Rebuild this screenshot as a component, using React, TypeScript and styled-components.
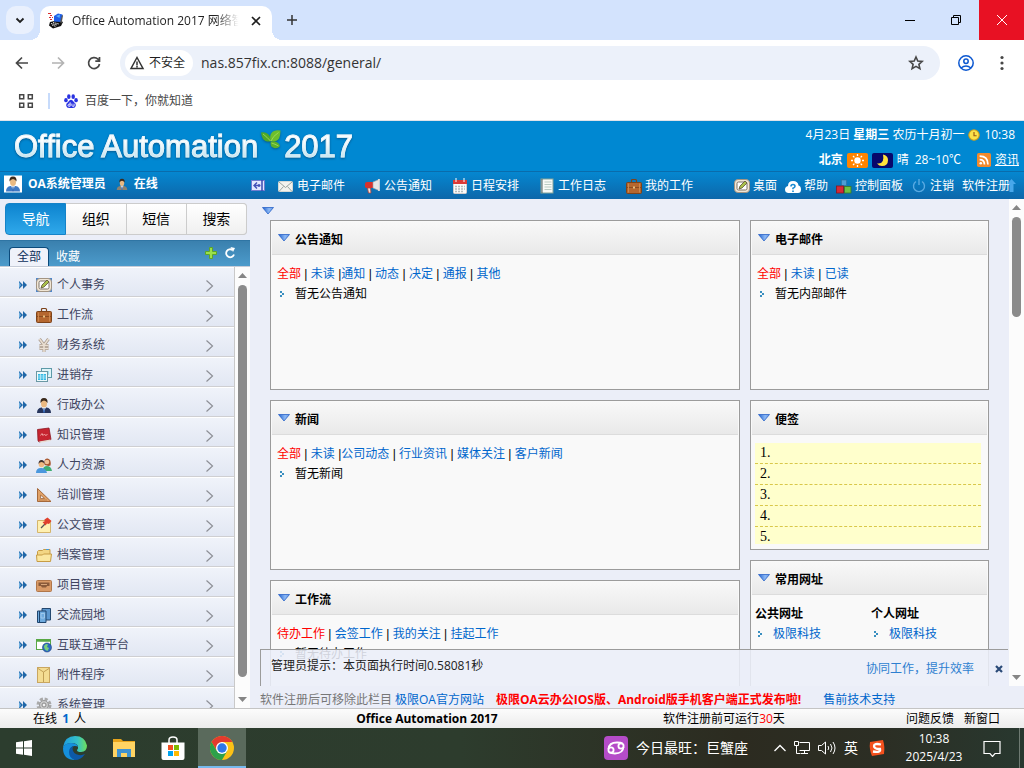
import React from 'react';
import styled, { createGlobalStyle, css } from 'styled-components';

const LATIN = '"Open Sans", "Noto Sans CJK SC", sans-serif';
const PLAIN = '"Liberation Sans", "Noto Sans CJK SC", sans-serif';

const GlobalStyle = createGlobalStyle`
  * { box-sizing: border-box; }
  body { margin: 0; font: 12px/20px ${LATIN}; color: #000; overflow: hidden; }
  button, input { font: inherit; color: inherit; border: 0; background: none; padding: 0; margin: 0; }
  a { color: #0066cc; text-decoration: none; }
  ul, ol { list-style: none; margin: 0; padding: 0; }
  h1, h2, h3, p { margin: 0; font-size: inherit; font-weight: inherit; }
  svg { display: block; flex: none; }
`;

const Screen = styled.div`
  display: flex;
  flex-direction: column;
  height: 100vh;
  white-space: nowrap;
`;

/* ---------- browser window ---------- */

const TabStrip = styled.div`
  display: flex;
  height: 40px;
  flex: none;
  background: #d3e3fd;
`;
const TabSearch = styled.button`
  display: grid;
  place-items: center;
  width: 28px;
  height: 28px;
  margin: 6px 6px 0;
  border-radius: 10px;
  background: #e9f0fd;
`;
const BrowserTab = styled.div`
  position: relative;
  display: flex;
  align-items: center;
  width: 232px;
  margin-top: 6px;
  padding: 0 10px 5px 8px;
  gap: 8px;
  background: #fff;
  border-radius: 10px 10px 0 0;
  &::before, &::after {
    content: '';
    position: absolute;
    bottom: 0;
    width: 10px;
    height: 10px;
  }
  &::before { left: -10px; background: radial-gradient(circle at 0 0, transparent 10px, #fff 10px); }
  &::after { right: -10px; background: radial-gradient(circle at 100% 0, transparent 10px, #fff 10px); }
`;
const TabTitle = styled.span`
  flex: 1;
  overflow: hidden;
  color: #1f1f1f;
  mask-image: linear-gradient(90deg, #000 84%, transparent 98%);
`;
const PlainButton = styled.button`
  display: grid;
  place-items: center;
  flex: none;
`;
const NewTab = styled(PlainButton)`
  width: 20px;
  margin-left: 10px;
`;
const WindowButtons = styled.div`
  display: flex;
  margin-left: auto;
`;
const WindowButton = styled(PlainButton)<{ $close?: boolean }>`
  width: ${p => (p.$close ? 45 : 46)}px;
  background: ${p => (p.$close ? '#e81123' : 'transparent')};
`;
const Toolbar = styled.div`
  display: flex;
  align-items: center;
  flex: none;
  height: 46px;
  padding: 0 14px;
  gap: 20px;
  background: #fff;
`;
const AddressBar = styled.div`
  display: flex;
  align-items: center;
  flex: 1;
  height: 34px;
  margin: 0 -2px;
  padding: 0 16px 0 5px;
  border-radius: 17px;
  background: #ecf1fa;
`;
const Insecure = styled.button`
  display: flex;
  align-items: center;
  height: 26px;
  gap: 4px;
  padding: 0 8px 0 4px;
  border-radius: 13px;
  background: #fff;
  color: #1f1f1f;
`;
const Url = styled.input`
  flex: 1;
  min-width: 0;
  margin-left: 8px;
  color: #333;
  font-size: 14px;
`;
const Bookmarks = styled.div`
  display: flex;
  align-items: center;
  flex: none;
  height: 35px;
  padding: 0 18px 5px;
  gap: 14px;
  background: #fff;
  border-bottom: 1px solid #dfe3ea;
  a { display: flex; align-items: center; gap: 7px; color: #474747; }
`;
const Divider = styled.span`
  width: 2px;
  height: 16px;
  background: #c7dbfb;
`;

/* ---------- OA header ---------- */

const Banner = styled.header`
  display: flex;
  justify-content: space-between;
  flex: none;
  height: 50px;
  padding-left: 14px;
  background: #0088d2;
  color: #fff;
`;
const Logo = styled.h1`
  display: flex;
  font: 31px/52px ${PLAIN};
  filter: drop-shadow(0 1px 1px #05598f);
  span {
    background: linear-gradient(#fff 40%, #bfe2ef 75%);
    background-clip: text;
    color: transparent;
    -webkit-text-stroke: 1px rgba(225, 242, 250, .7);
  }
  svg { margin: 8px 2px 0; }
`;
const InfoRows = styled.div`
  display: flex;
  flex-direction: column;
  align-items: flex-end;
  gap: 5px;
  padding: 4px 5px 0 0;
`;
const InfoRow = styled.div<{ $inset?: boolean }>`
  display: flex;
  align-items: center;
  height: 20px;
  gap: 4px;
  padding-right: ${p => (p.$inset ? 4 : 0)}px;
  a { color: #fff; text-decoration: underline; }
  span { margin: 0 12px 0 2px; }
`;
const MenuBar = styled.nav`
  display: flex;
  flex: none;
  height: 28px;
  padding: 1px 8px 0 4px;
  border-top: 1px solid #0a6cab;
  background: linear-gradient(#0587d0, #0d67aa);
  color: #fff;
  a { display: flex; align-items: center; gap: 3px; color: #fff; }
`;
const User = styled.div`
  display: flex;
  align-items: center;
  width: 247px;
  padding-bottom: 4px;
  gap: 6px;
  font-weight: bold;
  svg + span { margin-right: 4px; }
`;
const Shortcuts = styled.div`
  display: flex;
  align-items: center;
  gap: 20px;
  a:nth-child(2) { margin-left: -7px; }
`;
const Tools = styled.div`
  display: flex;
  align-items: center;
  gap: 8px;
  margin-left: auto;
`;
const ToTop = styled(PlainButton)`
  margin-left: -11px;
`;

/* ---------- workspace ---------- */

const Workspace = styled.div`
  display: flex;
  flex: 1;
  min-height: 0;
  background: #ebeef8;
`;
const Sidebar = styled.aside`
  display: flex;
  flex-direction: column;
  width: 250px;
  flex: none;
`;
const Segments = styled.div`
  display: flex;
  height: 32px;
  flex: none;
  margin: 4px 3px 5px 5px;
  border-radius: 4px;
  overflow: hidden;
  box-shadow: inset 0 0 0 1px #ccc;
`;
const Segment = styled.button<{ $on?: boolean }>`
  flex: 1;
  border: 1px solid #ccc;
  border-left-width: 0;
  background: linear-gradient(#fff, #f0f0f0);
  font: 14px/28px ${PLAIN};
  &:last-child { border-radius: 0 4px 4px 0; }
  ${p => p.$on && css`
    border: 1px solid #1583c8;
    border-radius: 4px 0 0 4px;
    background: linear-gradient(#0d84cf, #2fa8ea);
    color: #fff;
  `}
`;
const SubTabs = styled.div`
  display: flex;
  align-items: flex-end;
  flex: none;
  height: 26px;
  padding: 0 14px 0 9px;
  gap: 7px;
  border-top: 1px solid #2f75a4;
  background: linear-gradient(#3a80ae, #4c9bcb);
`;
const SubTab = styled.button<{ $on?: boolean }>`
  height: 18px;
  line-height: 18px;
  color: #fff;
  ${p => p.$on && css`
    height: 19px;
    padding: 0 7px;
    border: 1px solid #0b4a7b;
    border-bottom: 0;
    border-radius: 4px 4px 0 0;
    background: #eff2fa;
    color: #0b2f5a;
  `}
`;
const SubTools = styled.div`
  display: flex;
  gap: 7px;
  margin: 0 0 7px auto;
`;
const MenuArea = styled.div`
  display: flex;
  flex: 1;
  min-height: 0;
  border-top: 1px solid #c6ccd8;
`;
const MenuList = styled.ul`
  flex: 1;
  overflow: hidden;
  border-right: 1px solid #c9c9c9;
`;
const MenuItem = styled.a`
  display: flex;
  align-items: center;
  height: 30px;
  padding: 6px 20px 0 19px;
  gap: 5px;
  border-top: 1px solid #fff;
  border-bottom: 1px solid #cfcfd2;
  background: linear-gradient(#f0f3fa, #e2e7f3);
  color: #404560;
  line-height: 16px;
  svg:first-child { margin-right: 4px; }
  svg:last-child { margin: 2px 0 0 auto; }
`;
const ScrollTrack = styled.div`
  display: flex;
  flex-direction: column;
  align-items: center;
  justify-content: space-between;
  flex: none;
  width: 15px;
  padding: 6px 0;
  background: #fcfcfc;
`;
const ScrollRoom = styled.div`
  flex: 1;
  padding: 7px 0 20px;
`;
const Thumb = styled.div<{ $size: string }>`
  width: 9px;
  height: ${p => p.$size};
  border-radius: 5px;
  background: #8b8b8b;
`;
const Content = styled.main`
  display: flex;
  flex-direction: column;
  flex: 1;
  min-width: 0;
`;
const Frame = styled.div`
  position: relative;
  display: flex;
  flex: 1;
  min-height: 0;
`;
const Desk = styled.div`
  flex: 1;
  min-width: 0;
  overflow: hidden;
  padding: 8px 20px 0;
`;
const Collapse = styled(PlainButton)`
  margin: 0 0 5px -8px;
`;
const Columns = styled.div`
  display: grid;
  grid-template-columns: minmax(0, 470fr) minmax(0, 239fr);
  gap: 10px;
`;
const Column = styled.div`
  display: flex;
  flex-direction: column;
  gap: 10px;
`;
const Panel = styled.section<{ $h: number }>`
  height: ${p => p.$h}px;
  padding: 1px;
  overflow: hidden;
  border: 1px solid #9b9b9b;
  background: #f9f9f9;
`;
const PanelHead = styled.h2`
  display: flex;
  align-items: center;
  height: 33px;
  padding: 4px 6px 0;
  gap: 5px;
  border-bottom: 1px solid #dcdcdc;
  background: linear-gradient(#f8f8f8, #e9e9e9);
  font-weight: bold;
  svg { margin-bottom: 5px; }
`;
const PanelBody = styled.div`
  padding: 9px 5px 0;
  font-family: ${PLAIN};
  a[aria-current] { color: #f00; }
`;
const Entry = styled.p`
  display: flex;
  align-items: center;
  gap: 10px;
  padding-left: 3px;
`;
const Notes = styled.ol`
  height: 101px;
  overflow: hidden;
  margin: 8px 6px 0 3px;
  background: #ffffcc;
  font: 14px/20px "Liberation Serif", serif;
  li { height: 21px; padding-left: 5px; border-bottom: 1px dashed #d9c84a; }
`;
const Sites = styled.div`
  display: grid;
  grid-template-columns: 1fr 1fr;
  padding: 9px 0 0 3px;
  h3 { font-weight: bold; }
`;
const Notice = styled.div`
  position: absolute;
  left: 10px;
  right: 16px;
  bottom: 0;
  display: flex;
  align-items: center;
  height: 37px;
  padding: 1px 4px 0 10px;
  border: solid #9b9b9b;
  border-width: 1px 0 0 1px;
  background: rgba(235, 238, 248, .88);
  color: #222;
  span { flex: 1; padding-bottom: 5px; }
  a { color: #2e7fd0; }
  button { margin-left: 20px; }
`;
const Promo = styled.div`
  display: flex;
  flex: none;
  height: 22px;
  padding: 4px 0 0 10px;
  gap: 3px;
  color: #777;
  a + a { margin-left: 9px; }
  a:last-child { margin-left: 19px; }
`;
const HotLink = styled.a`
  color: #f00;
  font-weight: bold;
`;
const StatusBar = styled.footer`
  display: grid;
  grid-template-columns: 250px minmax(0, 354fr) minmax(0, 240fr) minmax(0, 180fr);
  flex: none;
  height: 20px;
  line-height: 20px;
  border-top: 1px solid #c4c4c4;
  background: linear-gradient(#fcfcfc, #ececec);
  text-align: center;
  a { color: #000; }
  em { color: #f00; font-style: normal; }
`;
const Online = styled.div`
  padding-left: 33px;
  text-align: left;
  b { margin: 0 2px; color: #0066cc; }
`;
const StatusLinks = styled.div`
  display: flex;
  justify-content: flex-end;
  gap: 10px;
  padding-right: 24px;
`;

/* ---------- taskbar ---------- */

const Taskbar = styled.div`
  display: flex;
  align-items: stretch;
  flex: none;
  height: 40px;
  padding-right: 4px;
  background: linear-gradient(90deg, #2c3d2e, #2d3c2d 45%, #2c2b20 72%, #2c2e24 86%, #28382f);
  color: #fff;
`;
const TaskButton = styled(PlainButton)<{ $active?: boolean }>`
  width: 48px;
  margin-right: 1px;
  &:first-child { margin-right: 3px; }
  ${p => p.$active && css`
    background: #5a6a5c;
    box-shadow: inset 0 -2px #76b9ed;
  `}
`;
const Tray = styled.div`
  display: flex;
  align-items: center;
  gap: 8px;
  margin-left: auto;
`;
const Horoscope = styled.button`
  display: flex;
  align-items: center;
  gap: 8px;
  margin-right: 18px;
  font-size: 14px;
`;
const Ime = styled.button`
  font-size: 14px;
  margin-right: 3px;
`;
const Clock = styled.button`
  width: 66px;
  line-height: 18px;
  margin: 0 8px;
`;
const ShowDesktop = styled.div`
  align-self: stretch;
  width: 1px;
  margin-left: 10px;
  background: #6e7a72;
`;

/* ---------- drawings ---------- */

type DrawProps = { w?: number; h?: number; box?: string; children: React.ReactNode };
const Draw = ({ w = 16, h = w, box = '0 0 16 16', children }: DrawProps) => (
  <svg width={w} height={h} viewBox={box} fill="none" aria-hidden="true">{children}</svg>
);

const BlueTriangle = () => (
  <Draw w={12} h={8} box="0 0 12 8">
    <defs>
      <linearGradient id="tri" x1="0" x2="1" y1="0" y2="0">
        <stop stopColor="#1f5fd0" /><stop offset=".6" stopColor="#8db9f4" /><stop offset="1" stopColor="#5f94e8" />
      </linearGradient>
    </defs>
    <path d="M.5 .5h11L6 7z" fill="url(#tri)" stroke="#2a63c8" strokeWidth=".8" />
  </Draw>
);
const Dots = () => (
  <Draw w={5} h={8} box="0 0 5 8"><path d="M0 1h2v2H0zM2 3h2v2H2zM0 5h2v2H0z" fill="#3a8fc0" /></Draw>
);
const DoubleArrow = () => (
  <Draw w={8} h={8} box="0 0 8 8">
    <path d="M0 0l4 4-4 4zM4 0l4 4-4 4z" fill="#1f66a8" /><path d="M0 1l2 3-2 3z" fill="#6fb0e0" />
  </Draw>
);
const Chevron = () => (
  <Draw w={9} h={12} box="0 0 9 12"><path d="M1.500 .5L7.500 6l-6 5.500" stroke="#8e9097" strokeWidth="1.200" /></Draw>
);
const Caret = ({ down }: { down?: boolean }) => (
  <Draw w={9} h={5} box="0 0 9 5"><path d={down ? 'M0 0h9L4.500 5z' : 'M0 5h9L4.500 0z'} fill="#858585" /></Draw>
);

const TabletArt = () => (
  <>
    <rect x=".5" y="1.500" width="15" height="13" rx="3.500" fill="#f0e6d6" stroke="#a39482" />
    <rect x="3" y="4" width="10" height="8" rx="1.500" fill="#fff" stroke="#7c7266" />
    <path d="M5 11l1-3 5-5 2 2-5 5z" fill="#a9c04a" stroke="#5d5236" strokeWidth=".8" />
  </>
);
const CaseArt = () => (
  <>
    <path d="M5.500 4.500V2.500q0-1 1-1h3q1 0 1 1v2" stroke="#7d431a" strokeWidth="1.200" />
    <rect x=".5" y="4.500" width="15" height="11" rx="1" fill="#b5672f" stroke="#7d431a" />
    <path d="M1 9.500h14" stroke="#8b4c20" /><path d="M2.500 5.500v9M13.500 5.500v9" stroke="#cc874e" />
    <rect x="7" y="8.500" width="2" height="2" fill="#e7bf7e" />
  </>
);
const PersonArt = ({ coat }: { coat: string }) => (
  <>
    <path d="M1 16q0-5 4.500-5.500h5Q15 11 15 16z" fill={coat} />
    <path d="M6 10h4l-2 5z" fill="#fff" /><path d="M7.500 11h1l.5 4-1 1-1-1z" fill="#3569b8" />
    <ellipse cx="8" cy="6.500" rx="3" ry="4" fill="#eab982" />
    <path d="M4.500 6Q4 1 8 1t3.500 5Q10 3.500 8 3.500T4.500 6z" fill="#3b2a1c" />
  </>
);

const menuArt: Record<string, React.ReactNode> = {
  tablet: <><rect y="1" width="16" height="14" fill="#4f86c9" /><TabletArt /></>,
  briefcase: <CaseArt />,
  yen: (
    <>
      <path d="M3.500 2L8 8l4.500-6M8 8v7M3.500 8.500h9M3.500 11.500h9" stroke="#a8998a" strokeWidth="3" />
      <path d="M3.500 2L8 8l4.500-6M8 8v7M3.500 8.500h9M3.500 11.500h9" stroke="#eadfd2" strokeWidth="1.600" />
    </>
  ),
  windows: (
    <>
      <rect x="5.500" y="1.500" width="10" height="9" fill="#dff4f8" stroke="#5c9aa8" /><path d="M8 5h6M8 7h6" stroke="#5ac8e8" strokeDasharray="1 1" />
      <rect x=".5" y="4.500" width="11" height="10" fill="#eefafc" stroke="#6b98a4" /><rect x="2" y="7" width="8" height="6" fill="#35b9e4" />
      <path d="M2 9h8M2 11h8M4.500 7v6M7.500 7v6" stroke="#b9eaf6" strokeWidth=".8" />
    </>
  ),
  suit: <PersonArt coat="#27355c" />,
  book: (
    <>
      <path d="M1.500 2.500L13 1l2 11.500L3 15l-1-1.500z" fill="#c62430" stroke="#8c1620" strokeWidth=".8" />
      <path d="M3 14.500l11.500-2v1.500L4 15.800z" fill="#e9dcd2" /><path d="M4.500 8.500L6 6.500l1 2L8.500 7l1 1.500 2-1" stroke="#f0a0a0" />
    </>
  ),
  people: (
    <>
      <path d="M7 13q0-4 4-4t5 5H8z" fill="#3fae72" /><path d="M8.500 8q-1-7 3-6.500t3 7l-2 .5z" fill="#a5522a" /><circle cx="11" cy="5" r="2.300" fill="#f0c196" />
      <path d="M0 16q0-5 5-5t6 5z" fill="#4a97dd" /><circle cx="5.500" cy="7.500" r="2.800" fill="#eeb981" /><path d="M2.500 7q0-4 3-4t3 4q-1-2-3-2T2.500 7z" fill="#40302a" />
    </>
  ),
  ruler: (
    <>
      <path d="M1.500 1.500v13h13.500z" fill="#e0a167" stroke="#a5683a" /><path d="M4.500 8v3.500h4z" fill="#eceff8" stroke="#a5683a" strokeWidth=".8" />
      <path d="M4 13.500v-1M6 13.500v-1M8 13.500v-1M10 13.500v-1" stroke="#8c5428" strokeWidth=".7" />
    </>
  ),
  pin: (
    <>
      <path d="M1.500 3.500h13v12h-13z" fill="#fff0b0" stroke="#d5b56c" /><path d="M5 11l4-4" stroke="#555" strokeWidth="1.300" />
      <path d="M8.500 2.500L11.500 .5l4 3.500-2.500 3-2-.5-1.500 2-3-3.500 2-.5z" fill="#e0412c" />
    </>
  ),
  folder: (
    <>
      <path d="M1.500 13V4.500l1-1h4l1-1h6.500V13z" fill="#f3d684" stroke="#c79c45" /><path d="M10 2.500h3" stroke="#4a9ad4" />
      <path d="M.5 8h6l1-1h8l-1 7.500H1z" fill="#fbe7a0" stroke="#c79c45" />
    </>
  ),
  drawer: (
    <>
      <rect x=".5" y="3.500" width="15" height="11" rx="1" fill="#d99a67" stroke="#b0764a" /><path d="M2.500 5.500h11V9h-2.500l-1 1.500H6L5 9H2.500z" fill="#8a5a3a" />
      <path d="M5 7.500h6" stroke="#d9a67a" />
    </>
  ),
  books: (
    <>
      <path d="M6 1.500h8.500V13H6z" fill="#5b97cf" stroke="#24476e" /><path d="M1.500 4H10v11.500H1.500z" fill="#6eaade" stroke="#1f456e" />
      <path d="M3.500 4v11" stroke="#1f456e" /><path d="M5 6.500h3.500V11H5z" stroke="#a9cff0" strokeWidth=".8" />
    </>
  ),
  globe: (
    <>
      <rect x=".5" y="2.500" width="14" height="10" fill="#fff" stroke="#59a845" /><path d="M0 3.500h15" stroke="#59a845" strokeWidth="2.500" />
      <circle cx="11" cy="10.500" r="4.500" fill="#2c6cc0" stroke="#1c3f80" strokeWidth=".6" /><path d="M8 9q2-3 4-1.500L11 10l2 1-1.500 3Q8 13 8 9z" fill="#7bd07c" />
    </>
  ),
  envelope: (
    <>
      <rect x="1.500" y=".5" width="12" height="15" fill="#f4dc92" stroke="#c9a660" /><path d="M2 1.500l5.500 3.500L13 1.500M7.500 5v10" stroke="#c2a056" />
    </>
  ),
  gear: (
    <>
      <circle cx="8" cy="8" r="6" stroke="#a9a9a9" strokeWidth="3" strokeDasharray="3 1.700" /><circle cx="8" cy="8" r="4.500" fill="#c9c9c9" stroke="#989898" />
      <circle cx="8" cy="8" r="2" fill="#f2f2f2" stroke="#888" />
    </>
  ),
};

const topArt: Record<string, React.ReactNode> = {
  mail: (
    <>
      <rect x=".5" y="3.500" width="14" height="10" rx="1" fill="#f3f3ee" stroke="#d5d9d5" /><path d="M1 4l6.500 5.500L14 4M1 13.500l4.500-5M14 13.500l-4.500-5" stroke="#9aa5a0" />
    </>
  ),
  horn: (
    <>
      <path d="M0 5.500q0-1.500 2-1.500h6v6H2q-2 0-2-1.500z" fill="#d8322c" /><path d="M8 4l6-2.500v11L8 10z" fill="#e6e6e6" stroke="#a3a3a3" strokeWidth=".6" />
      <path d="M14 1v12" stroke="#efe6e2" strokeWidth="1.500" /><path d="M2.500 10l1 5h2.500l-.5-5z" fill="#f4e4dc" stroke="#b0413a" strokeWidth=".8" />
    </>
  ),
  calendar: (
    <>
      <rect x="1.500" y="2.500" width="13" height="13" rx="1" fill="#fafafa" stroke="#d2cccc" /><path d="M1 2h14v4H1z" fill="#dd3a37" />
      <path d="M4 0v4M12 0v4" stroke="#fff" /><path d="M3 8.500h10M3 11h10M3 13.500h8" stroke="#b5bcbc" strokeWidth="1.500" strokeDasharray="2 1" />
    </>
  ),
  notebook: (
    <>
      <rect x="2" y="1" width="12" height="14" fill="#f8faf6" stroke="#83a39a" /><path d="M5.500 4h7M5.500 6.500h7M5.500 9h7M5.500 11.500h7" stroke="#b9cbc2" />
      <path d="M3 1.500v13" stroke="#4d5f62" strokeWidth="2" strokeDasharray="1 1" />
    </>
  ),
  briefcase: <CaseArt />,
  tablet: <TabletArt />,
  cloud: (
    <>
      <path d="M3 15q-3-.5-3-3.500t3-3.500q0-5 5-5t5.500 4.500Q16 8 16 11.500T13 15z" fill="#fff" />
      <path d="M6 8.500q0-2 2-2t2 1.700q0 1.300-2 2v1M8 12.500v1.500" stroke="#188bd2" strokeWidth="1.600" />
    </>
  ),
  blocks: (
    <>
      <rect x="5.500" y="2" width="5" height="5.500" fill="#4e9ed4" stroke="#2c6f9e" strokeWidth=".6" />
      <rect x=".5" y="8" width="7" height="7" fill="#d62a36" stroke="#8c1520" strokeWidth=".8" />
      <rect x="8.500" y="8.500" width="6.500" height="6.500" fill="#6fc242" stroke="#3b7a22" strokeWidth=".8" />
    </>
  ),
  power: <path d="M5 3.500a5.500 5.500 0 1 0 6 0M8 1v6" stroke="#5aaae2" strokeWidth="1.400" />,
};

const Favicon = () => (
  <Draw>
    <path d="M2 9l9-2 4 2-2 4-8 2.500-4-3z" fill="#111" /><path d="M6 3l4-2.500 4.500 1L13 9 6 8.500z" fill="#1e5fe8" />
    <path d="M8 3l4-1.500L11.500 5z" fill="#59b0ff" /><path d="M14 2l1 .5-1.500 8L12 9z" fill="#555" />
    <path d="M3 10.500l6 1.500M5 9.500l6 1.500M4 12l4 1.500" stroke="#e4e4e4" strokeDasharray="1.500 .7" />
    <path d="M0 .5h3M2 2.500h2M1 4.500h2M4 4.500h1M2 6.500h2" stroke="#d82a2a" />
  </Draw>
);
const Leaf = () => (
  <Draw w={22} h={22} box="0 0 22 22">
    <path d="M1 3.500Q5 2.500 8 5t3 7.500Q5 13 3 10 1.500 8 1 3.500z" fill="#4fa828" />
    <path d="M20.500 1.500Q14 .5 11.500 4q-2.500 3.500-.5 8.500 6 .5 8-3 1.500-3 1.500-8z" fill="#6cbf2c" />
    <path d="M10.500 13.500q3-2 6-.5t3.500 4q-2.500 3-6 2t-3.500-5.500z" fill="#5bb12a" />
    <path d="M3 5q4 3 7.500 7M18.500 3.500Q13 7 11 12M11.500 14q3.500 1 7 3" stroke="#a9dd62" strokeWidth=".8" />
  </Draw>
);

/* ---------- data ---------- */

const shortcuts = [['mail', '电子邮件'], ['horn', '公告通知'], ['calendar', '日程安排'], ['notebook', '工作日志'], ['briefcase', '我的工作']];
const tools = [['tablet', '桌面'], ['cloud', '帮助'], ['blocks', '控制面板'], ['power', '注销']];
const menu = [
  ['tablet', '个人事务'], ['briefcase', '工作流'], ['yen', '财务系统'], ['windows', '进销存'], ['suit', '行政办公'],
  ['book', '知识管理'], ['people', '人力资源'], ['ruler', '培训管理'], ['pin', '公文管理'], ['folder', '档案管理'],
  ['drawer', '项目管理'], ['books', '交流园地'], ['globe', '互联互通平台'], ['envelope', '附件程序'], ['gear', '系统管理'],
];

/* ---------- parts ---------- */

const ScrollBar = ({ size }: { size: string }) => (
  <ScrollTrack>
    <Caret />
    <ScrollRoom><Thumb $size={size} /></ScrollRoom>
    <Caret down />
  </ScrollTrack>
);

type FeedProps = { title: string; height: number; links: string[]; tight?: boolean; empty: string };
const Feed = ({ title, height, links, tight, empty }: FeedProps) => (
  <Panel $h={height}>
    <PanelHead><BlueTriangle />{title}</PanelHead>
    <PanelBody>
      <p>
        {links.map((text, i) => (
          <React.Fragment key={text}>
            {i > 0 && (tight && i === 2 ? ' |' : ' | ')}
            <a href="#" aria-current={i === 0 ? 'true' : undefined}>{text}</a>
          </React.Fragment>
        ))}
      </p>
      <Entry><Dots />{empty}</Entry>
    </PanelBody>
  </Panel>
);

export default function App() {
  return (
    <Screen>
      <GlobalStyle />
      <TabStrip>
        <TabSearch aria-label="Search tabs">
          <Draw w={10} box="0 0 10 10"><path d="M1.500 3.500L5 7l3.500-3.500" stroke="#1f1f1f" strokeWidth="1.800" /></Draw>
        </TabSearch>
        <BrowserTab>
          <Favicon />
          <TabTitle>Office Automation 2017 网络智能办公系统</TabTitle>
          <PlainButton aria-label="Close tab">
            <Draw w={12} box="0 0 12 12"><path d="M2 2l8 8M10 2l-8 8" stroke="#1f1f1f" strokeWidth="1.700" /></Draw>
          </PlainButton>
        </BrowserTab>
        <NewTab aria-label="New tab">
          <Draw w={12} box="0 0 12 12"><path d="M6 1v10M1 6h10" stroke="#333" strokeWidth="1.500" /></Draw>
        </NewTab>
        <WindowButtons>
          <WindowButton aria-label="Minimize"><Draw w={10} box="0 0 10 10"><path d="M0 5.500h10" stroke="#000" /></Draw></WindowButton>
          <WindowButton aria-label="Restore">
            <Draw w={10} box="0 0 10 10"><path d="M.5 2.500h7v7h-7zM2.500 2.500v-2h7v7h-2" stroke="#000" /></Draw>
          </WindowButton>
          <WindowButton $close aria-label="Close"><Draw w={10} box="0 0 10 10"><path d="M0 0l10 10M10 0L0 10" stroke="#fff" /></Draw></WindowButton>
        </WindowButtons>
      </TabStrip>
      <Toolbar>
        <PlainButton aria-label="Back"><Draw><path d="M14 8H3M8 2.500L2.500 8 8 13.500" stroke="#474747" strokeWidth="1.700" /></Draw></PlainButton>
        <PlainButton aria-label="Forward"><Draw><path d="M2 8h11M8 2.500L13.500 8 8 13.500" stroke="#b3b3b3" strokeWidth="1.700" /></Draw></PlainButton>
        <PlainButton aria-label="Reload">
          <Draw><path d="M13.500 9A5.500 5.500 0 1 1 12 4.200L13.500 6M13.500 2v4.200H9.300" stroke="#474747" strokeWidth="1.700" /></Draw>
        </PlainButton>
        <AddressBar>
          <Insecure>
            <Draw><path d="M8 2.500l6 11H2zM8 6.500v4M8 11v1.500" stroke="#333" strokeWidth="1.500" /></Draw>不安全
          </Insecure>
          <Url aria-label="Address" defaultValue="nas.857fix.cn:8088/general/" />
          <Draw><path d="M8 2l1.800 4 4.400.4-3.300 3 1 4.300L8 11.400l-3.900 2.300 1-4.300-3.300-3L6.200 6z" stroke="#474747" strokeWidth="1.600" /></Draw>
        </AddressBar>
        <PlainButton aria-label="Profile">
          <Draw><g stroke="#0b57d0" strokeWidth="1.500"><circle cx="8" cy="8" r="7.200" /><circle cx="8" cy="6.300" r="2.200" /><path d="M3 13q5-4 10 0" /></g></Draw>
        </PlainButton>
        <PlainButton aria-label="Menu">
          <Draw><g fill="#474747"><circle cx="8" cy="2.500" r="1.600" /><circle cx="8" cy="8" r="1.600" /><circle cx="8" cy="13.500" r="1.600" /></g></Draw>
        </PlainButton>
      </Toolbar>
      <Bookmarks>
        <PlainButton aria-label="Apps">
          <Draw><path d="M1.700 1.700h4v4h-4zM10.300 1.700h4v4h-4zM1.700 10.300h4v4h-4zM10.300 10.300h4v4h-4z" stroke="#474747" strokeWidth="1.500" /></Draw>
        </PlainButton>
        <Divider />
        <a href="#">
          <Draw w={14}>
            <g fill="#2932e1"><ellipse cx="2.200" cy="7" rx="2" ry="2.500" /><ellipse cx="5.500" cy="3" rx="2" ry="2.700" /><ellipse cx="10.500" cy="3" rx="2" ry="2.700" /><ellipse cx="13.800" cy="7" rx="2" ry="2.500" /><path d="M8 6.500q2 0 3.500 3 2.500 1.500 2 4T10 16H6q-3 0-3.500-2.500t2-4Q6 6.500 8 6.500z" /></g>
            <path d="M7 9.500v4.500H5.500q-1 0-1-1.300T7 11.500M9 11v2q0 1 1 1h1.500v-3" stroke="#fff" />
          </Draw>
          百度一下，你就知道
        </a>
      </Bookmarks>

      <Banner>
        <Logo><span>Office Automation</span><Leaf /><span>2017</span></Logo>
        <InfoRows>
          <InfoRow $inset>
            <div>4月23日 <b>星期三</b> 农历十月初一</div>
            <Draw w={12}><circle cx="8" cy="8" r="7" fill="#fbe24a" stroke="#c89a1c" strokeWidth="1.500" /><path d="M8 4v5h3.500" stroke="#9a5a10" strokeWidth="1.500" /></Draw>
            10:38
          </InfoRow>
          <InfoRow>
            <b>北京</b>
            <Draw w={21} h={15} box="0 0 21 15">
              <rect width="21" height="15" rx="2" fill="#ff8400" /><circle cx="10.500" cy="7.500" r="3.200" fill="#fff" />
              <g stroke="#fff" strokeWidth="1.300"><path d="M10.500 1v2M10.500 12v2M4 7.500h2M15 7.500h2M6 3l1.400 1.400M13.600 10.600L15 12M6 12l1.400-1.400M13.600 4.400L15 3" /></g>
            </Draw>
            <Draw w={21} h={15} box="0 0 21 15"><rect width="21" height="15" rx="2" fill="#07076b" /><path d="M11 1.500q5 1 5 5.500 0 6-6 6-3 0-5-2.500 8 1 6-9z" fill="#ffe23c" /></Draw>
            晴 <span>28~10℃</span>
            <Draw w={14}><rect width="16" height="16" rx="2" fill="#f28a2c" /><path d="M3 7.500q5.500 0 5.500 5.500M3 3.500q9.500 0 9.500 9.500" stroke="#fff" strokeWidth="2" /><circle cx="4.300" cy="11.700" r="1.500" fill="#fff" /></Draw>
            <a href="#">资讯</a>
          </InfoRow>
        </InfoRows>
      </Banner>
      <MenuBar>
        <User>
          <Draw w={18} box="-1 0 18 17"><rect x="-1" width="18" height="17" fill="#fff" /><PersonArt coat="#3e78c4" /></Draw>
          <span>OA系统管理员</span>
          <Draw w={12}><PersonArt coat="#8a8272" /></Draw>
          在线
        </User>
        <Shortcuts>
          <a href="#" aria-label="Collapse sidebar">
            <Draw w={14} h={12} box="0 0 14 12"><rect x=".5" y=".5" width="13" height="10" fill="#e4e8ff" stroke="#6f7cd0" /><path d="M6 2.500L3 5.500l3 3M3.500 5.500h6M8 4v3" stroke="#4450b8" strokeWidth="1.400" /><path d="M11 0v11" stroke="#3a4ab0" strokeWidth="1.500" /></Draw>
          </a>
          {shortcuts.map(([icon, text]) => <a href="#" key={text}><Draw>{topArt[icon]}</Draw>{text}</a>)}
        </Shortcuts>
        <Tools>
          {tools.map(([icon, text]) => <a href="#" key={text}><Draw>{topArt[icon]}</Draw>{text}</a>)}
          <a href="#">软件注册</a>
          <ToTop aria-label="Scroll to top"><Draw w={9} h={14} box="0 0 9 14"><path d="M4.500 0L9 5H6.500v8h-4V5H0z" fill="#48a7ea" /></Draw></ToTop>
        </Tools>
      </MenuBar>

      <Workspace>
        <Sidebar>
          <Segments>
            <Segment $on>导航</Segment><Segment>组织</Segment><Segment>短信</Segment><Segment>搜索</Segment>
          </Segments>
          <SubTabs>
            <SubTab $on>全部</SubTab>
            <SubTab>收藏</SubTab>
            <SubTools>
              <PlainButton aria-label="Add">
                <Draw w={12} box="0 0 12 12"><path d="M4.500 .5h3v4h4v3h-4v4h-3v-4h-4v-3h4z" fill="#9be04a" stroke="#5ca52a" /></Draw>
              </PlainButton>
              <PlainButton aria-label="Refresh">
                <Draw w={12} box="0 0 12 12"><path d="M10 7.500A4 4 0 1 1 8.500 3" stroke="#fff" strokeWidth="1.800" /><path d="M6.500 0l4.500 1-2 4z" fill="#fff" /></Draw>
              </PlainButton>
            </SubTools>
          </SubTabs>
          <MenuArea>
            <MenuList>
              {menu.map(([icon, text]) => (
                <li key={text}>
                  <MenuItem href="#"><DoubleArrow /><Draw>{menuArt[icon]}</Draw>{text}<Chevron /></MenuItem>
                </li>
              ))}
            </MenuList>
            <ScrollBar size="100%" />
          </MenuArea>
        </Sidebar>
        <Content>
          <Frame>
            <Desk>
              <Collapse aria-label="Collapse"><BlueTriangle /></Collapse>
              <Columns>
                <Column>
                  <Feed title="公告通知" height={170} tight links={['全部', '未读', '通知', '动态', '决定', '通报', '其他']} empty="暂无公告通知" />
                  <Feed title="新闻" height={170} tight links={['全部', '未读', '公司动态', '行业资讯', '媒体关注', '客户新闻']} empty="暂无新闻" />
                  <Feed title="工作流" height={170} links={['待办工作', '会签工作', '我的关注', '挂起工作']} empty="暂无待办工作" />
                </Column>
                <Column>
                  <Feed title="电子邮件" height={170} links={['全部', '未读', '已读']} empty="暂无内部邮件" />
                  <Panel $h={150}>
                    <PanelHead><BlueTriangle />便签</PanelHead>
                    <Notes>{[1, 2, 3, 4, 5].map(n => <li key={n}>{n}.</li>)}</Notes>
                  </Panel>
                  <Panel $h={170}>
                    <PanelHead><BlueTriangle />常用网址</PanelHead>
                    <Sites>
                      <div><h3>公共网址</h3><Entry><Dots /><a href="#">极限科技</a></Entry></div>
                      <div><h3>个人网址</h3><Entry><Dots /><a href="#">极限科技</a></Entry></div>
                    </Sites>
                  </Panel>
                </Column>
              </Columns>
            </Desk>
            <ScrollBar size="100px" />
            <Notice>
              <span>管理员提示：本页面执行时间0.58081秒</span>
              <a href="#">协同工作，提升效率</a>
              <PlainButton aria-label="Dismiss"><Draw w={10} box="0 0 10 10"><path d="M2 2l6 6M8 2L2 8" stroke="#2b4a78" strokeWidth="2.200" /></Draw></PlainButton>
            </Notice>
          </Frame>
          <Promo>
            软件注册后可移除此栏目 <a href="#">极限OA官方网站</a>
            <HotLink href="#">极限OA云办公IOS版、Android版手机客户端正式发布啦!</HotLink>
            <a href="#">售前技术支持</a>
          </Promo>
        </Content>
      </Workspace>
      <StatusBar>
        <Online>在线 <b>1</b> 人</Online>
        <b>Office Automation 2017</b>
        <div>软件注册前可运行<em>30</em>天</div>
        <StatusLinks><a href="#">问题反馈</a><a href="#">新窗口</a></StatusLinks>
      </StatusBar>

      <Taskbar>
        <TaskButton aria-label="Start">
          <Draw><path d="M0 2.300L7 1.300v6.200H0zM8 1.200L16 0v7.500H8zM0 8.500h7v6.200l-7-1zM8 8.500h8V16l-8-1.200z" fill="#fff" /></Draw>
        </TaskButton>
        <TaskButton aria-label="Edge">
          <Draw w={24} box="0 0 24 24">
            <defs>
              <linearGradient id="edge" x1="0" x2="1"><stop stopColor="#1d9be0" /><stop offset=".6" stopColor="#35c1c8" /><stop offset="1" stopColor="#6fe05a" /></linearGradient>
            </defs>
            <path d="M0 11Q2 0 12 0t12 9.500q0 6-6 6.500-4 0-4-2 1.500-1.500 1-3.500Q14 7 9 7 2 7 0 12z" fill="url(#edge)" />
            <path d="M0 12Q2 7 8 7q6 0 7 4-1-1-3-1-5 0-5 5 0 6 5 9Q0 24 0 12z" fill="#1590dc" />
            <path d="M11 10q-5 1-5 6 0 6 6 8 6 0 10-6-3 1.500-6 1-6-1-6.500-6 0-2 1.500-3z" fill="#0c59a8" />
          </Draw>
        </TaskButton>
        <TaskButton aria-label="Files">
          <Draw w={22} h={18} box="0 0 22 18"><path d="M0 0h8l2 2h12v5H0z" fill="#e8a51c" /><path d="M0 3h22v15H0z" fill="#ffd463" /><path d="M4 10h14v8h-4v-4H8v4H4z" fill="#3f93d2" /></Draw>
        </TaskButton>
        <TaskButton aria-label="Store">
          <Draw w={24} box="0 0 24 24">
            <path d="M8 7V4q0-3 4-3t4 3v3" stroke="#fff" strokeWidth="1.500" /><path d="M.5 6.500h23V22q0 2-2 2h-19q-2 0-2-2z" fill="#fff" />
            <path d="M7 9h5v5H7z" fill="#f25022" /><path d="M13 9h5v5h-5z" fill="#7fba00" /><path d="M7 15h5v5H7z" fill="#00a4ef" /><path d="M13 15h5v5h-5z" fill="#ffb900" />
          </Draw>
        </TaskButton>
        <TaskButton $active aria-label="Chrome">
          <Draw w={24} box="0 0 24 24">
            <circle cx="12" cy="12" r="12" fill="#fbc116" /><path d="M1.600 6a12 12 0 0 1 20.800 0H12l-5 9z" fill="#e33b2e" />
            <path d="M1.600 6A12 12 0 0 0 12 24l5.200-9H6.800z" fill="#2da14a" /><circle cx="12" cy="12" r="6" fill="#fff" /><circle cx="12" cy="12" r="4.700" fill="#2f77e8" />
          </Draw>
        </TaskButton>
        <Tray>
          <Horoscope>
            <Draw w={24} box="0 0 24 24"><rect width="24" height="24" rx="4" fill="#b54cc8" /><g stroke="#fff" strokeWidth="1.800"><circle cx="7" cy="14" r="2.600" /><circle cx="17" cy="10" r="2.600" /><path d="M4.500 13Q5 6.500 13 6.500q4 0 5.500 1M19.500 11q-.5 6.500-8.500 6.500-4 0-5.500-1" /></g></Draw>
            今日最旺：巨蟹座
          </Horoscope>
          <Draw w={12} h={8} box="0 0 12 8"><path d="M.5 7L6 1.500 11.500 7" stroke="#fff" strokeWidth="1.300" /></Draw>
          <Draw><path d="M5.500 2.500h10v8h-10M10.500 10.500v3M7 13.500h7M.5 1.500h4v4h-4zM2.500 5.500v8h4" stroke="#fff" /></Draw>
          <Draw w={18} box="0 0 18 16"><path d="M.5 5.500h3l4-3.500v12l-4-3.500h-3zM10 6q1.500 2 0 4M12.500 4q3 4 0 8M15 2q4 6 0 12" stroke="#fff" /></Draw>
          <Ime>英</Ime>
          <Draw><path d="M1 2l13-2q2 6 1 14L3 16Q0 9 1 2z" fill="#f4511e" /><path d="M12 4.500Q5 3 5 6t6 3q1 4-7 2.500" stroke="#fff" strokeWidth="2.300" /></Draw>
          <Clock>10:38<br />2025/4/23</Clock>
          <Draw w={18} box="0 0 18 18"><path d="M1 2.500h16v12h-5l-2.500 3-2.500-3H1z" stroke="#fff" strokeWidth="1.200" /></Draw>
          <ShowDesktop />
        </Tray>
      </Taskbar>
    </Screen>
  );
}
